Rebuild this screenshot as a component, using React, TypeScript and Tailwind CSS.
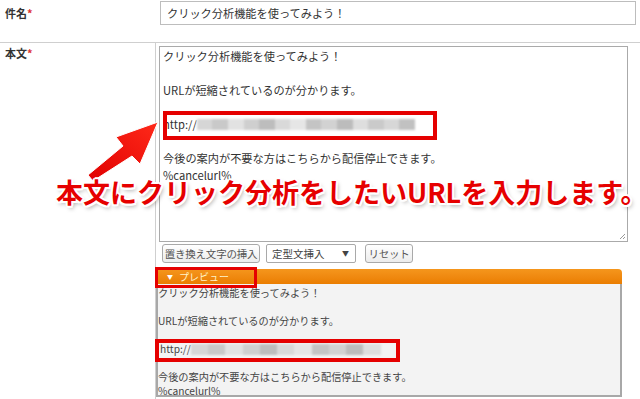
import React from "react";

const jp = "font-['Noto_Sans_CJK_JP','Noto_Sans',sans-serif]";

function Blur({ width, shades }: { width: number; shades: string[] }) {
    // pixelated / blurred url part
    return (
        <span className="inline-flex h-[11px] align-middle blur-[1.2px]" style={{ width }}>
            {shades.map((c, i) => (
                <span key={i} className="h-full flex-1" style={{ background: c }} />
            ))}
        </span>
    );
}

const shadesA = ["#d6d6d6", "#c9c9c9", "#e2e2e2", "#cfcfcf", "#bdbdbd", "#d9d9d9", "#e6e6e6", "#c4c4c4", "#d2d2d2", "#bcbcbc", "#dedede", "#cacaca", "#d7d7d7", "#c1c1c1"];

function Arrow() {
    return (
        <svg className="absolute left-[82px] top-[116px]" width="82" height="70" viewBox="82 116 82 70">
            <defs>
                <linearGradient id="ar" x1="0" y1="1" x2="1" y2="0">
                    <stop offset="0" stopColor="#e00000" />
                    <stop offset="1" stopColor="#ff2a1a" />
                </linearGradient>
            </defs>
            <polygon
                points="158,122 140,164 132,156 93,181 88,175 123,146 116,137"
                fill="url(#ar)"
                stroke="#ffffff"
                strokeWidth="1"
                strokeLinejoin="round"
            />
        </svg>
    );
}

function Btn({ children, className }: { children: React.ReactNode; className?: string }) {
    return (
        <div
            className={`flex h-[19px] items-center justify-center whitespace-nowrap rounded-[3px] border border-[#a9a9a9] bg-gradient-to-b from-white to-[#ececec] text-[10.5px] tracking-[-0.2px] text-[#555] ${className ?? ""}`}
        >
            {children}
        </div>
    );
}

export default function App() {
    return (
        <div className={`relative h-[399px] w-[640px] overflow-hidden bg-white text-[#333] ${jp}`}>
            {/* 件名 */}
            <div className="flex h-[43px] border-b border-[#cfcfcf]">
                <div className="w-[155px] pl-[5px] pt-[5px] text-[11px] font-bold leading-[16px]">
                    件名<span className="text-[#d33]">*</span>
                </div>
                <div className="pl-[5px] pt-px">
                    <div className="flex h-[24px] w-[476px] items-center border border-[#bdbdbd] pl-[6px] text-[11.2px]">
                        クリック分析機能を使ってみよう！
                    </div>
                </div>
            </div>

            {/* 本文 */}
            <div className="flex h-[356px]">
                <div className="w-[156px] border-r border-[#cfcfcf] pl-[5px] pt-[2px] text-[11px] font-bold leading-[16px]">
                    本文<span className="text-[#d33]">*</span>
                </div>
                <div className="flex flex-col pt-[3px]">
                    <div className="relative ml-[3px] h-[196px] w-[469px] border border-[#aaa] px-[3px] pt-[1px] text-[11.2px] leading-[17px]">
                        <div>クリック分析機能を使ってみよう！</div>
                        <div>&nbsp;</div>
                        <div>URLが短縮されているのが分かります。</div>
                        <div>&nbsp;</div>
                        <div className="flex items-center">
                            http://<Blur width={218} shades={shadesA} />
                        </div>
                        <div>&nbsp;</div>
                        <div>今後の案内が不要な方はこちらから配信停止できます。</div>
                        <div>%cancelurl%</div>
                        <div className="absolute left-[3px] top-[64px] h-[29px] w-[274px] border-[4px] border-[#e50000]" />
                        <svg className="absolute bottom-px right-px" width="7" height="7" viewBox="0 0 7 7">
                            <path d="M6 1 L1 6 M6 4 L4 6" stroke="#999" strokeWidth="1" />
                        </svg>
                    </div>

                    <div className="ml-[6px] mt-[2px] flex gap-[6px]">
                        <Btn className="w-[98px]">置き換え文字の挿入</Btn>
                        <div className="flex h-[19px] w-[90px] items-center justify-between rounded-[2px] border border-[#a9a9a9] bg-white pl-[5px] pr-[6px] text-[10.5px] text-[#444]">
                            定型文挿入
                            <span className="text-[7px]">▼</span>
                        </div>
                        <Btn className="ml-[3px] w-[48px]">リセット</Btn>
                    </div>

                    <div className="relative mt-[6px] w-[466px]">
                        <div className="flex h-[15px] items-center rounded-t-[4px] bg-gradient-to-b from-[#f5961c] to-[#ea7d00] pl-[11px] text-[10px] text-[#fff3c8]">
                            <span className="mr-[6px] text-[6px] text-white">▼</span>
                            プレビュー
                        </div>
                        <div className="h-[113px] border-x-2 border-b-2 border-[#a8a8a8] bg-[#f3f3f3] text-[10.2px] leading-[14px] text-[#444]">
                            <div className="pt-[2px]">
                                <div>クリック分析機能を使ってみよう！</div>
                                <div>&nbsp;</div>
                                <div>URLが短縮されているのが分かります。</div>
                                <div>&nbsp;</div>
                                <div className="flex items-center pl-[2px]">
                                    http://<Blur width={190} shades={shadesA.slice(0, 11)} />
                                </div>
                                <div>&nbsp;</div>
                                <div>今後の案内が不要な方はこちらから配信停止できます。</div>
                                <div>%cancelurl%</div>
                            </div>
                        </div>
                        <div className="absolute left-[-1px] top-[-2px] h-[21px] w-[102px] border-[3px] border-[#e50000]" />
                        <div className="absolute left-[-1px] top-[70px] h-[23px] w-[245px] border-[4px] border-[#e50000]" />
                    </div>
                </div>
            </div>

            <Arrow />

            <div className="absolute left-[56px] top-[174px] whitespace-nowrap text-[27px] font-bold leading-[36px] tracking-[0px] text-[#e60000] [text-shadow:2px_0_0_#fff,-2px_0_0_#fff,0_2px_0_#fff,0_-2px_0_#fff,1.5px_1.5px_0_#fff,-1.5px_1.5px_0_#fff,1.5px_-1.5px_0_#fff,-1.5px_-1.5px_0_#fff,2px_3px_4px_rgba(0,0,0,0.35)]">
                本文にクリック分析をしたいURLを入力します。
            </div>
        </div>
    );
}
